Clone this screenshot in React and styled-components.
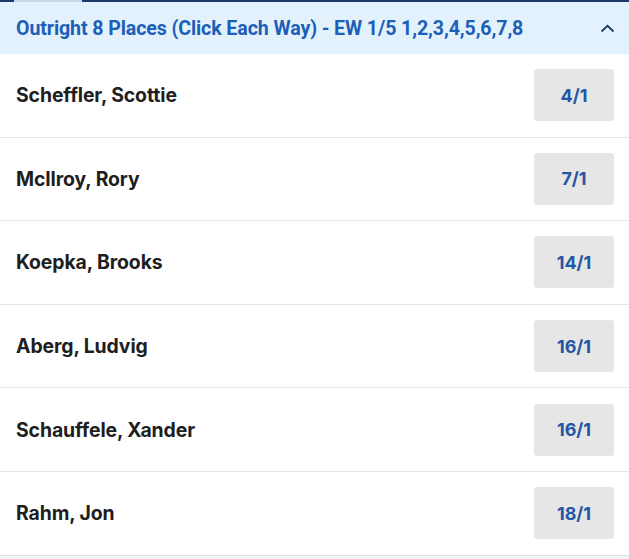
import React from 'react';
import styled, { createGlobalStyle } from 'styled-components';

const Global = createGlobalStyle`
  body {
    margin: 0;
    background: #f4f4f4;
    font-family: Roboto, "Liberation Sans", sans-serif;
  }
`;

const runners = [
  { name: 'Scheffler, Scottie', odds: '4/1' },
  { name: 'McIlroy, Rory', odds: '7/1' },
  { name: 'Koepka, Brooks', odds: '14/1' },
  { name: 'Aberg, Ludvig', odds: '16/1' },
  { name: 'Schauffele, Xander', odds: '16/1' },
  { name: 'Rahm, Jon', odds: '18/1' },
];

const App = () => {
  return (
    <>
      <Global />
      <Market>
        <TopBar>
          <TabMark />
        </TopBar>
        <Header>
          <Title>Outright 8 Places (Click Each Way) - EW 1/5 1,2,3,4,5,6,7,8</Title>
          <svg width="15" height="9" viewBox="0 0 15 9">
            <path d="M1.5 7.5 L7.5 1.8 L13.5 7.5" fill="none" stroke="#1d3a6b" strokeWidth="1.8" />
          </svg>
        </Header>
        {runners.map((r) => (
          <Row key={r.name}>
            <Name>{r.name}</Name>
            <Price>{r.odds}</Price>
          </Row>
        ))}
      </Market>
    </>
  );
};

const Market = styled.div`
  background: #fff;
`;

const TopBar = styled.div`
  height: 2px;
  background: #1d3a6b;
  padding-left: 14px;
`;

const TabMark = styled.div`
  width: 68px;
  height: 2px;
  background: #c9d6e6;
`;

const Header = styled.div`
  display: flex;
  align-items: center;
  justify-content: space-between;
  height: 52px;
  padding: 0 14px 0 16px;
  background: #e3f1fc;
`;

const Title = styled.div`
  color: #1c5fb8;
  font-size: 19.6px;
  font-weight: 700;
  letter-spacing: -0.1px;
`;

const Row = styled.div`
  display: flex;
  align-items: center;
  justify-content: space-between;
  height: 82.6px;
  padding: 0 15px 0 16px;
  border-bottom: 1px solid #e4e4e4;
`;

const Name = styled.div`
  color: #1e1e1e;
  font-family: Inter, Roboto, sans-serif;
  font-size: 19.4px;
  font-weight: 700;
  letter-spacing: -0.1px;
`;

const Price = styled.button`
  width: 80px;
  height: 52px;
  border: none;
  border-radius: 3px;
  background: #e6e6e6;
  color: #2556a3;
  font-family: Inter, Roboto, sans-serif;
  font-size: 18px;
  font-weight: 700;
  cursor: pointer;
`;

export default App;
